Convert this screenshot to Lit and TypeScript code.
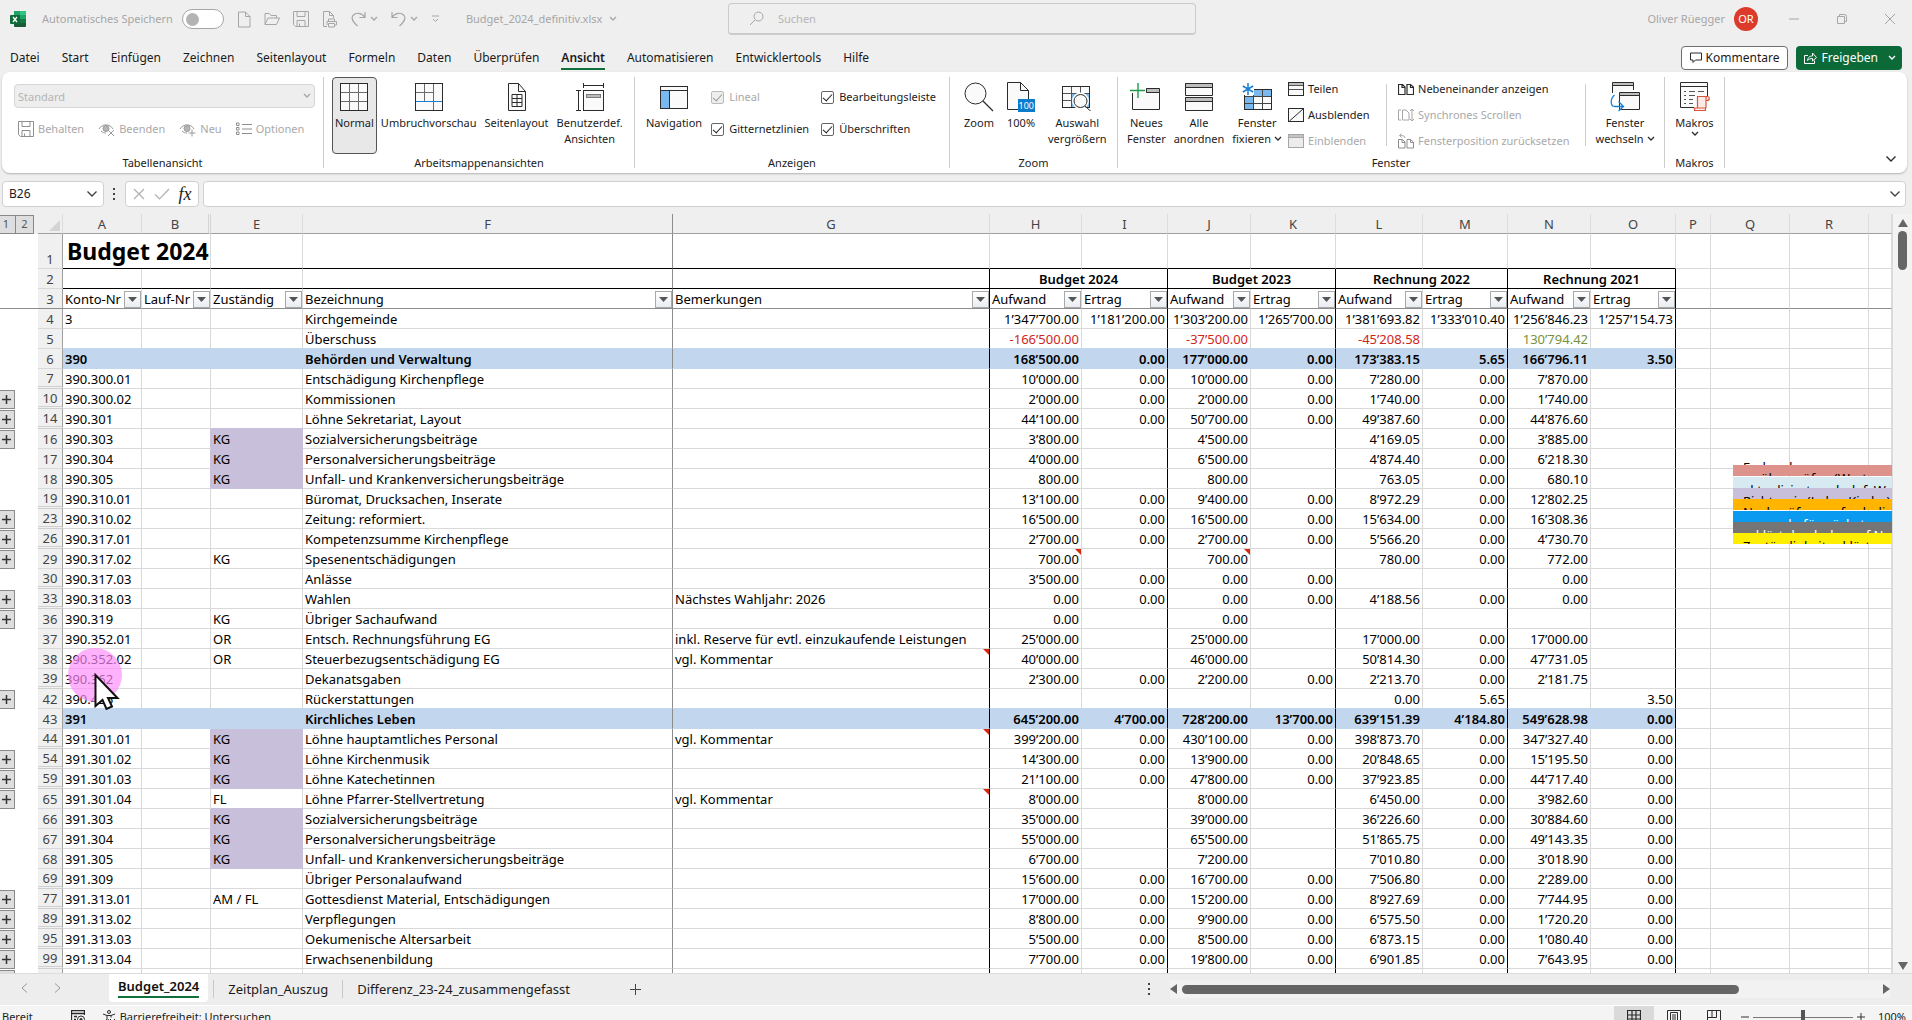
import { LitElement, html, css, svg, nothing, type TemplateResult } from "lit";
import { customElement } from "lit/decorators.js";
import { classMap } from "lit/directives/class-map.js";

const K = "#2b2b2b";
const G = "#a6a6a6";
const BLUE = "#1a7fd4";

const pic = (w: number, h: number, body: unknown) =>
  html`<svg class="pic" width=${w} height=${h} viewBox="0 0 ${w} ${h}" fill="none" aria-hidden="true">${body}</svg>`;

const chevron = (color = K, w = 8) =>
  html`<svg class="pic" width=${w} height="6" viewBox="0 0 8 6" fill="none" stroke=${color} stroke-width="1.3" aria-hidden="true"><path d="M1 1l3 3 3-3" /></svg>`;

const bigChevron = (color = K) =>
  html`<svg class="pic" width="12" height="8" viewBox="0 0 12 8" fill="none" stroke=${color} stroke-width="1.4" aria-hidden="true"><path d="M1.500 1.500l4.500 4.500 4.500-4.500" /></svg>`;

const icons = {
  excel: pic(16, 16, svg`
    <rect x="4" y="0" width="12" height="16" rx="1" fill="#185c37"/>
    <path d="M5 0h5v4H4V1a1 1 0 0 1 1-1z" fill="#21a366"/><path d="M10 0h5a1 1 0 0 1 1 1v3h-6z" fill="#33c481"/>
    <rect x="10" y="4" width="6" height="4" fill="#21a366"/><rect x="4" y="4" width="6" height="4" fill="#107c41"/>
    <rect x="10" y="8" width="6" height="4" fill="#107c41"/>
    <rect x="0" y="4" width="10" height="9" rx="1" fill="#0e6b38"/>
    <path d="M3 6l4 5M7 6l-4 5" stroke="#fff" stroke-width="1.300"/>`),
  doc: pic(13, 17, svg`<path d="M.5 1h7l4.500 4.500V16H.5zM7.500 1v4.500H12" stroke=${G}/>`),
  open: pic(16, 14, svg`<path d="M1 12.500V1.500h4.500l1.500 2h5.500v2.500M1 12.500L4 6h11.500l-3 6.500z" stroke=${G}/>`),
  save: pic(16, 16, svg`<path d="M.5.500h15v15H2.500l-2-2zM4 .5v5h8v-5M4 15.500V9.500h8v6M6.500 12.500v3" stroke=${G}/>`),
  print: pic(16, 17, svg`<path d="M5 15.500H1.500V.500h6l4 4V7M7.500.500v4h4" stroke=${G}/><path d="M6.500 10.500V8h6v2.500M5 14V10.500h9.500V14h-2M6.500 12.500h6V16h-6z" stroke=${G}/>`),
  redo: pic(15, 16, svg`<path d="M14 1v5.500H8.500M14 6.500C11 1.500 5 1 2 4.500c-2.500 3.500 0 6 2 8l2.500 2.500" stroke=${G} stroke-width="1.200"/>`),
  undo: pic(15, 16, svg`<path d="M1 1v5.500h5.500M1 6.500c3-5 9-5.500 12-2 2.500 3.500 0 6-2 8L8.500 15" stroke=${G} stroke-width="1.200"/>`),
  more: pic(9, 8, svg`<path d="M1 1h7M2 4l2.500 2.500L7 4" stroke=${G}/>`),
  lens: pic(15, 15, svg`<circle cx="9.500" cy="5.500" r="4.500" stroke=${G}/><path d="M6.200 8.800L1 14" stroke=${G}/>`),
  keep: pic(16, 16, svg`<path d="M.5.500h15v15H2.500l-2-2zM4 .5v5h8v-5M4 15.500V9.500h8v6M6.500 12.500v3" stroke="#8f8f8f"/>`),
  eyeX: pic(17, 15, svg`<path d="M1 7C4 1.500 12 1.500 15 7M3 9c1.500 1.500 3 2 5 2" stroke="#9a9a9a"/><circle cx="8" cy="6.500" r="3" fill="#b5b5b5" stroke="#9a9a9a"/><path d="M10 8l6 6M16 8l-6 6" stroke="#9a9a9a"/>`),
  eyePlus: pic(17, 15, svg`<path d="M1 7C4 1.500 12 1.500 15 7M3 9c1.500 1.500 3 2 5 2" stroke="#9a9a9a"/><circle cx="8" cy="6.500" r="3" fill="#b5b5b5" stroke="#9a9a9a"/><path d="M13 7.500v7M9.500 11h7" stroke="#9a9a9a"/>`),
  options: pic(16, 14, svg`<path d="M.5 1h2.500v2.500H.5zM.5 5.500h2.500V8H.5zM.5 10h2.500v2.500H.5zM6 2.500h10M6 7h10M6 11.500h10" stroke="#8f8f8f"/>`),
  gridBig: pic(28, 28, svg`<rect x=".5" y=".5" width="27" height="27" fill="#fafafa" stroke=${K}/><path d="M9.500 1v26M18.500 1v26M1 9.500h26M1 18.500h26" stroke="#6b6b6b"/>`),
  breaks: pic(28, 28, svg`<rect x=".5" y=".5" width="27" height="27" fill="#fafafa" stroke=${K}/><path d="M9.500 1v17M1 9.500h17" stroke="#6b6b6b"/><path d="M18.500 1v26M1 18.500h26" stroke=${BLUE}/>`),
  page: pic(18, 28, svg`<path d="M.5.500h10l7 8v19H.5z" fill="#fafafa" stroke=${K}/><path d="M10.500.500v8h7" stroke=${K}/><path d="M4 11.500h10v12H4zM9 11.500v12M4 15.500h10M4 19.500h10" stroke=${K}/>`),
  custom: pic(28, 28, svg`<path d="M7.500 2.500h20M7.500 0v5M27.500 0v5M2.500 7.500v20M0 7.500h5M0 27.500h5" stroke=${K}/><rect x="7.500" y="7.500" width="20" height="20" fill="#fafafa" stroke=${K}/><rect x="10.500" y="11.500" width="14" height="3" fill="#b8b8b8" stroke="#7a7a7a"/>`),
  nav: pic(28, 24, svg`<rect x=".5" y="1.500" width="27" height="22" fill="#fafafa" stroke=${K}/><path d="M1 6h8v17H1z" fill="#7ab8f0"/><path d="M.5 5.500h27M9.500 6v17" stroke=${K}/>`),
  zoom: pic(30, 30, svg`<circle cx="11.500" cy="11.500" r="10.500" fill="#fafafa" stroke=${K}/><path d="M19 19l10 10" stroke=${K} stroke-width="1.300"/>`),
  hundred: html`<span class="hundred">${pic(22, 28, svg`<path d="M.5.500h13l8 8v19H.5z" fill="#fafafa" stroke=${K}/><path d="M13.500.500v8h8" stroke=${K}/>`)}<span class="badge">100</span></span>`,
  selection: pic(30, 28, svg`<rect x=".5" y="3.500" width="27" height="21" fill="#fafafa" stroke=${K}/><path d="M9.500 10.500h18v14h-18z" fill="#7ab8f0"/><path d="M9.500 4v20M18.500 4v20M1 10.500h26M1 17.500h26" stroke="#555"/><rect x=".5" y="3.500" width="27" height="21" stroke=${K}/><circle cx="18.500" cy="18" r="8.500" fill="#fff"/><circle cx="18.500" cy="18" r="6.500" fill="#fafafa" stroke=${K}/><path d="M23 23l6 5.500" stroke=${K}/>`),
  newWin: pic(32, 28, svg`<path d="M2.500 10v16.500h27V6h-13" fill="#fafafa" stroke=${K}/><path d="M16.500 5.500h13v4h-13z" fill="#bdbdbd" stroke=${K}/><path d="M8 0v15M0 7.500h15" stroke="#1f9d4d" stroke-width="1.400"/>`),
  arrange: pic(28, 28, svg`<path d="M.5.500h27v12H.5zM.5 14.500h27v13H.5z" fill="#fafafa" stroke=${K}/><path d="M.5.500h27v4H.5zM.5 14.500h27v4H.5z" fill="#bdbdbd" stroke=${K}/>`),
  freeze: pic(30, 28, svg`<rect x="2.500" y="6.500" width="27" height="20" fill="#fafafa" stroke=${K}/><path d="M3 13h9v13H3zM12 7h17v6H12z" fill="#7ab8f0"/><path d="M11.500 7v19M20.500 7v19M3 13.500h26M3 20.500h26" stroke="#444"/><rect x="2.500" y="6.500" width="27" height="20" stroke=${K}/><rect x="0" y="0" width="12" height="12" fill="#fff"/><path d="M6 0v12M.8 3l10.400 6M11.200 3L.8 9" stroke=${BLUE} stroke-width="1.500"/>`),
  split: pic(16, 14, svg`<rect x=".5" y=".5" width="15" height="13" fill="#fafafa" stroke=${K}/><path d="M1 1h14v2H1z" fill="#bdbdbd"/><path d="M1 3.500h14M1 7.500h14" stroke="#555"/>`),
  hide: pic(16, 14, svg`<rect x=".5" y=".5" width="15" height="13" fill="#fafafa" stroke=${K}/><path d="M1.500 13L15 1" stroke=${K}/>`),
  unhide: pic(16, 14, svg`<rect x=".5" y=".5" width="15" height="13" fill="#ececec" stroke=${G}/><path d="M.5 3.500h15" stroke=${G}/><path d="M1 1h14v2H1z" fill="#c4c4c4"/>`),
  side: pic(16, 11, svg`<path d="M.5.500h4l2.500 2.500v7.500H.5zM9 .5h3.500l3 2.500v7.500H9zM4 .5v3h3M12.500.500v3h3" stroke=${K} stroke-width="1.200"/>`),
  sync: pic(16, 15, svg`<path d="M3 2H.5v10H3M4.500 2h3.500l3 3v7H4.500zM14 1v12M12 3l2-2 2 2M12 11l2 2 2-2" stroke=${G}/>`),
  reset: pic(16, 16, svg`<path d="M.5 6.500h4L7 9v6H.5zM9 6.500h3.500l3 2.500v6H9zM4 6.500v3h3M12.500 6.500v3h3" stroke="#8f8f8f"/><path d="M7 5C7 2.500 4 2.500 1.500 2.500M3.500.500l-2 2 2 2" stroke=${G}/>`),
  switchWin: pic(31, 30, svg`<path d="M2.500 11V1.500h21V8" fill="#fafafa" stroke=${K}/><path d="M2.500.500h21v3h-21z" fill="#bdbdbd" stroke=${K}/><path d="M9.500 11.500h20v16h-20z" fill="#fafafa" stroke=${K}/><path d="M9.500 10.500h20v3h-20z" fill="#bdbdbd" stroke=${K}/><path d="M4.500 13C0 17 0 24.500 5 24.500h8M8.500 19.500l5 5-5 4.500" stroke=${BLUE} stroke-width="1.300"/>`),
  macros: pic(30, 30, svg`<path d="M14 25.500H.5V.500h27V15" fill="#fafafa" stroke=${K}/><path d="M.5 4.500h27" stroke=${K}/><path d="M4 9.500h2M9 9.500h6M18 9.500h6M4 13.500h2M9 13.500h6M4 17.500h2M9 17.500h4M4 21.500h2M9 21.500h4" stroke="#555"/><path d="M17.500 26V14.500h9.500c3 0 3 4 0 4h-1V26M26 18.500v-4M14.500 26h11v2.500h-11z" fill="#fdece6" stroke="#d9553a" stroke-width="1.200"/>`),
  comment: pic(12, 12, svg`<path d="M.5 1h11v7H5.500L3 10.500V8H.5z" stroke=${K}/>`),
  share: pic(13, 12, svg`<path d="M4 3.500H.5v8h10V8.500M3.500 8.500C4 5 6 4 8.500 4V1l4 4.500-4 3.500V6.500C6.500 6.500 5 7 3.500 8.500z" stroke="#fff"/>`),
  cross: pic(12, 12, svg`<path d="M1 1l10 10M11 1L1 11" stroke="#b0b0b0" stroke-width="1.200"/>`),
  tick: pic(16, 12, svg`<path d="M1 6.500l4.500 4.500L15 1" stroke="#b0b0b0" stroke-width="1.200"/>`),
  dots: pic(3, 12, svg`<path d="M0 0h2v2H0zM0 5h2v2H0zM0 10h2v2H0z" fill="#444"/>`),
  minimize: pic(10, 10, svg`<path d="M0 5h10" stroke=${G}/>`),
  restore: pic(10, 10, svg`<path d="M2.500 2.500V.500h5a2 2 0 0 1 2 2v5H7.500M.5 2.500h7v7H.5z" stroke=${G}/>`),
  close: pic(10, 10, svg`<path d="M0 0l10 10M10 0L0 10" stroke=${G}/>`),
  record: pic(14, 14, svg`<path d="M6 12.500H.5V.500h13V5M.5 3.500h13M3 6.500h3M3 9.500h2" stroke=${K} stroke-width="1.300"/><circle cx="10" cy="9.500" r="3.500" fill="#f3f3f3" stroke=${K}/><circle cx="10" cy="9.500" r="1.500" fill=${K}/>`),
  access: pic(15, 14, svg`<circle cx="7" cy="2" r="1.500" stroke=${K}/><path d="M1 4l4 1.500v3L3.500 13M13 4L9 5.500v2M5 5.500h4M4 13l2.500-4" stroke=${K}/><path d="M8 9l5 5M13 9l-5 5" stroke=${K}/>`),
  viewGrid: pic(14, 14, svg`<path d="M.5.500h13v13H.5zM5 .5v13M9 .5v13M.5 5h13M.5 9h13" stroke=${K} stroke-width="1.200"/>`),
  viewPage: pic(14, 14, svg`<path d="M.5.500h13v13H.5zM3.500 2.500h7v9h-7zM5 5h4M5 7h4M5 9h4" stroke=${K}/>`),
  viewBreak: pic(14, 14, svg`<path d="M.5.500h13v13H.5zM5 .5v7M9.500.500v7h-9" stroke=${K}/>`),
  pointer: pic(26, 38, svg`<path d="M1.500 2v31l7-6 4 9 5.500-2.500-4-8.500h9.500z" fill="#fff" stroke="#111" stroke-width="2"/>`),
};

interface Row {
  n: number;
  cells: string[];
  expand: boolean;
  total: boolean;
  notes: number[];
}

/* Fields: row | account | responsible (* = shaded) | label | remark | eight amounts | flags.
   Flags: T total row, + collapsed group, digits mark columns that carry a comment. */
const SOURCE = `
4|3||Kirchgemeinde||1'347'700.00|1'181'200.00|1'303'200.00|1'265'700.00|1'381'693.82|1'333'010.40|1'256'846.23|1'257'154.73
5|||Überschuss||-166'500.00||-37'500.00||-45'208.58||130'794.42|
6|390||Behörden und Verwaltung||168'500.00|0.00|177'000.00|0.00|173'383.15|5.65|166'796.11|3.50|T
7|390.300.01||Entschädigung Kirchenpflege||10'000.00|0.00|10'000.00|0.00|7'280.00|0.00|7'870.00|
10|390.300.02||Kommissionen||2'000.00|0.00|2'000.00|0.00|1'740.00|0.00|1'740.00||+
14|390.301||Löhne Sekretariat, Layout||44'100.00|0.00|50'700.00|0.00|49'387.60|0.00|44'876.60||+
16|390.303|*KG|Sozialversicherungsbeiträge||3'800.00||4'500.00||4'169.05|0.00|3'885.00||+
17|390.304|*KG|Personalversicherungsbeiträge||4'000.00||6'500.00||4'874.40|0.00|6'218.30|
18|390.305|*KG|Unfall- und Krankenversicherungsbeiträge||800.00||800.00||763.05|0.00|680.10|
19|390.310.01||Büromat, Drucksachen, Inserate||13'100.00|0.00|9'400.00|0.00|8'972.29|0.00|12'802.25|
23|390.310.02||Zeitung: reformiert.||16'500.00|0.00|16'500.00|0.00|15'634.00|0.00|16'308.36||+
26|390.317.01||Kompetenzsumme Kirchenpflege||2'700.00|0.00|2'700.00|0.00|5'566.20|0.00|4'730.70||+
29|390.317.02|KG|Spesenentschädigungen||700.00||700.00||780.00|0.00|772.00||+46
30|390.317.03||Anlässe||3'500.00|0.00|0.00|0.00|||0.00|
33|390.318.03||Wahlen|Nächstes Wahljahr: 2026|0.00|0.00|0.00|0.00|4'188.56|0.00|0.00||+
36|390.319|KG|Übriger Sachaufwand||0.00||0.00||||||+
37|390.352.01|OR|Entsch. Rechnungsführung EG|inkl. Reserve für evtl. einzukaufende Leistungen|25'000.00||25'000.00||17'000.00|0.00|17'000.00|
38|390.352.02|OR|Steuerbezugsentschädigung EG|vgl. Kommentar|40'000.00||46'000.00||50'814.30|0.00|47'731.05||3
39|390.362||Dekanatsgaben||2'300.00|0.00|2'200.00|0.00|2'213.70|0.00|2'181.75|
42|390.436||Rückerstattungen||||||0.00|5.65||3.50|+
43|391||Kirchliches Leben||645'200.00|4'700.00|728'200.00|13'700.00|639'151.39|4'184.80|549'628.98|0.00|T
44|391.301.01|*KG|Löhne hauptamtliches Personal|vgl. Kommentar|399'200.00|0.00|430'100.00|0.00|398'873.70|0.00|347'327.40|0.00|3
54|391.301.02|*KG|Löhne Kirchenmusik||14'300.00|0.00|13'900.00|0.00|20'848.65|0.00|15'195.50|0.00|+
59|391.301.03|*KG|Löhne Katechetinnen||21'100.00|0.00|47'800.00|0.00|37'923.85|0.00|44'717.40|0.00|+
65|391.301.04|FL|Löhne Pfarrer-Stellvertretung|vgl. Kommentar|8'000.00||8'000.00||6'450.00|0.00|3'982.60|0.00|+3
66|391.303|*KG|Sozialversicherungsbeiträge||35'000.00||39'000.00||36'226.60|0.00|30'884.60|0.00
67|391.304|*KG|Personalversicherungsbeiträge||55'000.00||65'500.00||51'865.75|0.00|49'143.35|0.00
68|391.305|*KG|Unfall- und Krankenversicherungsbeiträge||6'700.00||7'200.00||7'010.80|0.00|3'018.90|0.00
69|391.309||Übriger Personalaufwand||15'600.00|0.00|16'700.00|0.00|7'506.80|0.00|2'289.00|0.00
77|391.313.01|AM / FL|Gottesdienst Material, Entschädigungen||17'000.00|0.00|15'200.00|0.00|8'927.69|0.00|7'744.95|0.00|+
89|391.313.02||Verpflegungen||8'800.00|0.00|9'900.00|0.00|6'575.50|0.00|1'720.20|0.00|+
95|391.313.03||Oekumenische Altersarbeit||5'500.00|0.00|8'500.00|0.00|6'873.15|0.00|1'080.40|0.00|+
99|391.313.04||Erwachsenenbildung||7'700.00|0.00|19'800.00|0.00|6'901.85|0.00|7'643.95|0.00|+
0|||||||||||||+`;

const ROWS: Row[] = SOURCE.trim().split("\n").map((line) => {
  const p = line.replace(/'/g, "’").split("|");
  const flags = p[13] ?? "";
  return {
    n: Number(p[0]),
    cells: [p[1], "", ...p.slice(2, 13)],
    expand: flags.includes("+"),
    total: flags === "T",
    notes: (flags.match(/\d/g) ?? []).map((d) => Number(d) + 1),
  };
});

const COLS = ["A", "B", "E", "F", "G", "H", "I", "J", "K", "L", "M", "N", "O", "P", "Q", "R", ""];
const PERIODS = ["Budget 2024", "Budget 2023", "Rechnung 2022", "Rechnung 2021"];
const FILTERS = ["Konto-Nr", "Lauf-Nr", "Zuständig", "Bezeichnung", "Bemerkungen", ...PERIODS.flatMap(() => ["Aufwand", "Ertrag"])];
const LEGEND: [string, string][] = [
  ["pink", "zu überprüfen (Wert aus Vorjahr)"],
  ["ice", "aktualisiert nach def. Wert VJ"],
  ["lilac", "Richtpreis (Lohn, Kirche)"],
  ["orange", "Nachprüfung erforderlich"],
  ["azure", "zu regeln für nächstes auf NR"],
  ["gray", "erklärt durch das auf Nr (VJ)"],
  ["yellow", "Zuständigkeit erklärt"],
];

/** Vertical rule at the right of a column: frozen pane edge or a period's frame. */
const edge = (i: number) => ({
  pane: i === 3,
  frame: [4, 6, 8, 10, 12].includes(i),
});

@customElement("budget-grid")
export class BudgetGrid extends LitElement {
  static styles = css`
    :host { display: block; position: relative; flex: 1; min-width: 0; overflow: hidden; background: #fff; }
    table { width: 100%; table-layout: fixed; border-collapse: separate; border-spacing: 0; }
    th, td { box-sizing: border-box; height: 20px; padding: 1px 2px 0; border: 0 solid #d9d9d9; border-right-width: 1px; border-bottom-width: 1px; font-size: 13px; line-height: 18px; font-weight: 400; text-align: left; white-space: nowrap; overflow: visible; color: #000; position: relative; }
    .letters th { background: #efefef; color: #444; text-align: center; border-bottom-color: #a0a0a0; border-right-color: #dcdcdc; }
    .letters .twin { border-right: 3px double #d4d4d4; }
    .letters .corner { padding: 0; }
    .corner svg { display: block; margin: 4px 2px 0 auto; }
    td.gutter, .letters th.gutter { border: 0; padding: 0; background: #fff; }
    .letters th.gutter { background: #efefef; }
    .levels { display: flex; }
    .levels button { width: 19px; height: 19px; padding: 0; border: 1px solid #888; background: #dedede; color: #555; font: 11px/16px "Noto Sans", sans-serif; }
    .levels button:first-child { width: 15px; border-width: 1px 0 1px 0; padding-right: 3px; }
    .plus { display: grid; place-items: center; width: 15px; height: 19px; padding: 0 2px 0 0; border: 1px solid #8a8a8a; border-left: 0; background: #dedede; }
    .num { background: #f0f0f0; color: #444; text-align: center; padding: 1px 0 0; border-right-color: #a0a0a0; }
    .skip { border-bottom: 3px double #cfcfcf; line-height: 16px; }
    .titlerow th, .titlerow td { height: 35px; vertical-align: bottom; }
    .titlerow .title { font-size: 23px; line-height: 33px; font-weight: 700; padding: 1px 4px 0; }
    .ink { border-bottom-color: #000; }
    .frame { border-right-color: #000; }
    .pane, .letters th.pane { border-right-color: #8c8c8c; }
    .period { text-align: center; font-weight: 600; }
    .frozen > *, .frozen td.gutter { border-bottom: 1px solid #8c8c8c; }
    .filter { display: flex; justify-content: space-between; align-items: center; height: 18px; margin-right: -2px; overflow: hidden; }
    .filter button { flex: none; display: grid; place-items: center; width: 17px; height: 17px; padding: 0; border: 1px solid #a9a9a9; background: linear-gradient(#fff, #e9edf2); }
    .right { text-align: right; }
    .total .blue { background: #c2d6ee; font-weight: 600; border-color: #c2d6ee; }
    .total .frame { border-right-color: #000; }
    .total .pane { border-right-color: #8c8c8c; }
    .before .blue { border-bottom-color: #c2d6ee; }
    .kg { background: #c8c0da; border-color: #c8c0da; }
    .kgright { border-right-color: #c8c0da; }
    .kgabove { border-bottom-color: #c8c0da; }
    .neg { color: #d0241b; }
    .pos { color: #76923c; }
    .note::after { content: ""; position: absolute; top: 0; right: 0; border-top: 6px solid #d62a10; border-left: 6px solid transparent; }
    .legend { position: absolute; top: 242px; right: 0; width: 159px; font-size: 13px; line-height: 16px; color: #000; }
    .head, .band { height: 11px; overflow: hidden; padding: 5px 0 0 10px; box-sizing: border-box; white-space: nowrap; }
    .head { height: 9px; padding-top: 3px; }
    .pink { background: #dd938c; } .ice { background: #d7eaf2; margin-top: 1px; } .lilac { background: #c8c0da; }
    .orange { background: #ffb400; } .azure { background: #0a9bf0; color: #fff; margin-top: 1px; } .gray { background: #757575; color: #fff; }
    .yellow { background: #ffee00; }
  `;

  private plus() {
    return html`<button class="plus" aria-label="Gruppe einblenden">
      <svg width="9" height="9" viewBox="0 0 9 9" aria-hidden="true"><path d="M4.500 0v9M0 4.500h9" stroke="#333" stroke-width="1.500" /></svg>
    </button>`;
  }

  private row(r: Row, i: number): TemplateResult {
    const next = ROWS[i + 1];
    const skipped = !next || next.n !== r.n + 1;
    return html`<tr class=${classMap({ total: r.total, before: !!next?.total })}>
      <td class="gutter">${r.expand ? this.plus() : nothing}</td>
      <th scope="row" class=${classMap({ num: true, skip: skipped })}>${r.n || nothing}</th>
      ${[...r.cells, "", "", "", "", "", ""].slice(0, 17).map((raw, c) => {
        const kg = raw.startsWith("*");
        const cls = {
          ...edge(c),
          right: c > 4,
          kg,
          blue: c < 13,
          kgright: c === 1 && (r.cells[2] ?? "").startsWith("*"),
          kgabove: c === 2 && !kg && !!next?.cells[2]?.startsWith("*") && !r.total,
          neg: c > 4 && raw.startsWith("-"),
          pos: c > 4 && r.n === 5 && !raw.startsWith("-"),
          note: r.notes.includes(c),
        };
        return html`<td class=${classMap(cls)}>${kg ? raw.slice(1) : raw}</td>`;
      })}
    </tr>`;
  }

  render() {
    const widths = [38, 25, 79, 69, 92, 370, 317, 92, 86, 83, 85, 87, 85, 83, 85, 35, 79, 79];
    return html`
      <table>
        <colgroup>${widths.map((w) => html`<col style="width:${w}px" />`)}<col /></colgroup>
        <thead>
          <tr class="letters">
            <th class="gutter"><div class="levels"><button>1</button><button>2</button></div></th>
            <th class="corner"><svg width="11" height="11" viewBox="0 0 11 11" aria-hidden="true"><path d="M11 0v11H0z" fill="#d4d4d4" /></svg></th>
            ${COLS.map((l, c) => html`<th scope="col" class=${classMap({ pane: c === 3, twin: c === 1 })}>${l}</th>`)}
          </tr>
        </thead>
        <tbody>
          <tr class="titlerow">
            <td class="gutter"></td><th scope="row" class="num">1</th>
            <td class="title ink" colspan="2">Budget 2024</td>
            ${COLS.slice(2).map((_, i) => html`<td class=${classMap({ ink: i + 2 < 13, pane: i === 1 })}></td>`)}
          </tr>
          <tr>
            <td class="gutter"></td><th scope="row" class="num">2</th>
            ${COLS.slice(0, 5).map((_, c) => html`<td class=${classMap({ ink: true, ...edge(c) })}></td>`)}
            ${PERIODS.map((p) => html`<th scope="colgroup" class="period ink frame" colspan="2">${p}</th>`)}
            <td></td><td></td><td></td><td></td>
          </tr>
          <tr class="frozen">
            <td class="gutter"></td><th scope="row" class="num">3</th>
            ${FILTERS.map((f, c) => html`<th scope="col" class=${classMap(edge(c))}>
              <div class="filter"><span>${f}</span><button aria-label="${f} filtern"><svg width="9" height="5" viewBox="0 0 9 5" aria-hidden="true"><path d="M0 0h9L4.500 5z" fill="#555" /></svg></button></div>
            </th>`)}
            <td></td><td></td><td></td><td></td>
          </tr>
          ${ROWS.map((r, i) => this.row(r, i))}
        </tbody>
      </table>
      <div class="legend">
        <div class="head">Farbcodes</div>
        ${LEGEND.map(([c, t]) => html`<div class="band ${c}">${t}</div>`)}
      </div>
    `;
  }
}

@customElement("app-root")
export class AppRoot extends LitElement {
  static styles = css`
    :host { display: flex; flex-direction: column; position: relative; height: 100vh; overflow: hidden; background: #efefef; font-family: "Noto Sans", "Open Sans", sans-serif; font-size: 11px; line-height: 16px; color: #1b1b1b; }
    * { box-sizing: border-box; }
    button { font: inherit; color: inherit; background: none; border: 0; padding: 0; white-space: nowrap; }
    input, select { font: inherit; color: inherit; }
    .pic { display: block; flex: none; }
    .spacer { flex: 1; }

    .titlebar { display: grid; grid-template-columns: 728px 468px 1fr; flex: none; height: 38px; color: #a6a6a6; }
    .left { display: flex; align-items: center; padding-left: 10px; }
    .left label { display: flex; align-items: center; gap: 9px; margin: 0 14px 0 16px; }
    .toggle { appearance: none; width: 42px; height: 20px; margin: 0; padding: 3px; border: 1px solid #a6a6a6; border-radius: 10px; background: #fff; display: flex; }
    .toggle::before { content: ""; width: 13px; height: 13px; border-radius: 50%; background: #b4b4b4; }
    .quick { display: flex; align-items: center; gap: 13px; margin-right: 26px; }
    .quick button { display: flex; align-items: center; gap: 4px; }
    .file { display: flex; align-items: center; gap: 6px; }
    .search { display: flex; align-items: center; gap: 14px; height: 32px; margin-top: 3px; padding: 0 20px; border: 1px solid #cbcbcb; border-bottom-width: 2px; border-radius: 4px; }
    .search input { flex: 1; min-width: 0; border: 0; background: none; outline: 0; padding: 0; }
    .search input::placeholder { color: #b5b5b5; opacity: 1; }
    .right { display: flex; align-items: center; justify-content: flex-end; padding-right: 17px; }
    .avatar { width: 24px; height: 24px; margin: 0 31px 0 9px; border-radius: 50%; background: #dc3a2b; color: #fff; text-align: center; line-height: 24px; font-size: 11px; }
    .window { display: flex; gap: 38px; }

    .tabs { display: flex; align-items: center; flex: none; height: 34px; padding: 6px 10px 0; font-size: 12px; }
    .tabs nav { display: flex; gap: 22px; padding-top: 2px; }
    .tabs a { color: inherit; text-decoration: none; line-height: 20px; border-bottom: 2px solid transparent; }
    .tabs a.on { font-weight: 600; border-color: #0f703b; }
    .outline, .share { display: flex; align-items: center; height: 24px; gap: 4px; border-radius: 4px; }
    .outline { padding: 0 8px; border: 1px solid #6e6e6e; background: #fff; margin-right: 8px; }
    .share { padding: 0 6px 0 8px; background: #0b6a37; color: #fff; }
    .share svg:last-child { margin-left: 6px; }

    .ribbon { display: flex; flex: none; height: 101px; margin: 0 5px 0 2px; border-radius: 8px; background: #fff; box-shadow: 0 1px 2px rgba(0, 0, 0, 0.25); }
    .group { display: flex; flex-direction: column; position: relative; margin: 5px 0; border-right: 1px solid #cdcdcd; }
    .body { display: flex; flex: none; height: 77px; align-items: flex-start; }
    .caption { line-height: 18px; text-align: center; }
    .g1 { width: 322px; } .g2 { width: 311px; } .g3 { width: 315px; } .g4 { width: 168px; } .g5 { width: 547px; } .g6 { width: 60px; }
    .g1 .body { flex-direction: column; padding: 7px 8px 0 12px; gap: 13px; }
    .style { appearance: none; width: 100%; height: 24px; padding: 1px 3px 0; border: 1px solid #d6d6d6; border-radius: 4px; background: #eee; color: #b5b5b5; opacity: 1; }
    .stylewrap { display: grid; width: 100%; align-items: center; }
    .stylewrap > * { grid-area: 1 / 1; }
    .stylewrap svg { justify-self: end; margin-right: 4px; }
    .line { display: flex; gap: 14px; padding-left: 4px; }
    .line button, .stack button { display: flex; align-items: center; gap: 4px; }
    .line .dim, .stack .dim, label.dim { color: #a9a9a9; }
    .big { display: flex; flex-direction: column; align-items: center; height: 77px; padding: 0 3px; border: 1px solid transparent; border-radius: 4px; }
    .big .art { display: grid; place-items: center; height: 37px; }
    .big.on { background: #e8e8e8; border-color: #555; padding: 0 2px; }
    .big .two { display: flex; align-items: center; gap: 3px; }
    .g2 .body { padding-left: 8px; }
    .g3 .body { padding-left: 7px; gap: 5px; }
    .checks { display: grid; grid-template-columns: 110px auto; row-gap: 16px; padding-top: 12px; }
    .checks label { display: flex; align-items: center; gap: 5px; }
    .checks input { appearance: none; display: grid; place-items: start center; width: 13px; height: 13px; margin: 0; border: 1px solid #666; border-radius: 2px; background: #fff; }
    .checks input:checked::before { content: ""; width: 4px; height: 8px; border: solid #222; border-width: 0 1px 1px 0; transform: rotate(42deg); }
    .checks input:disabled { border-color: #bbb; background: #eee; }
    .checks input:disabled::before { border-color: #999; }
    .g4 .body { padding-left: 10px; gap: 5px; }
    .hundred { display: grid; width: 28px; height: 30px; }
    .hundred > * { grid-area: 1 / 1; }
    .badge { align-self: end; justify-self: end; padding: 0 1px; height: 13px; background: #0b7bcb; color: #fff; font-size: 9px; line-height: 13px; }
    .g5 .body { padding-left: 5px; }
    .stack { display: flex; flex-direction: column; gap: 10px; padding-top: 4px; }
    .stack button { height: 16px; line-height: 16px; }
    .stack.a { width: 98px; margin-left: 2px; }
    .stack.b { width: 198px; padding-left: 11px; }
    .rule { width: 1px; height: 62px; margin-top: 7px; background: #cdcdcd; }
    .g5 .last { margin: 0 auto; }
    .g6 .big { margin: 0 auto; }
    .collapse { align-self: flex-end; margin: 0 10px 10px auto; }

    .formula { display: flex; flex: none; align-items: center; gap: 4px; height: 41px; padding: 1px 6px 0 2px; }
    .box { display: flex; align-items: center; height: 26px; border: 1px solid #d0d0d0; border-radius: 4px; background: #fff; }
    .name { width: 102px; padding: 0 5px 0 6px; }
    .name input { width: 76px; flex: 1; min-width: 0; border: 0; padding: 0; outline: 0; font-size: 12px; }
    .formula .grip { padding: 0 5px 0 5px; }
    .tools { width: 74px; padding: 0 5px; gap: 9px; justify-content: center; }
    .fx { font: italic 18px/22px "Liberation Serif", serif; color: #222; }
    .entry { flex: 1; padding: 0 4px; }
    .entry input { flex: 1; min-width: 0; border: 0; outline: 0; }

    .sheet { display: flex; flex: 1; min-height: 0; }
    .vbar { display: flex; flex-direction: column; align-items: center; width: 20px; padding: 5px 0 3px; border-left: 1px solid #dcdcdc; background: #f3f3f3; }
    .vthumb { width: 9px; height: 39px; margin-top: 4px; border-radius: 5px; background: #666; }

    .sheets { display: flex; flex: none; align-items: flex-start; height: 32px; border-top: 1px solid #dcdcdc; font-size: 13px; background: #ededed; }
    .arrows { display: flex; gap: 26px; padding: 9px 0 0 21px; width: 109px; }
    .tab { display: flex; align-items: flex-start; }
    .active { height: 28px; padding: 2px 9px 0; background: #fff; border-radius: 0 0 4px 4px; font-weight: 600; color: #111; }
    .active span { line-height: 20px; border-bottom: 2px solid #0f703b; }
    .plain { height: 18px; margin-top: 6px; padding: 0 14px; border-left: 1px solid #c8c8c8; line-height: 18px; }
    .first { margin-left: 5px; }
    .add { margin: 10px 0 0 46px; }
    .sheets .grip { margin: 9px 19px 0 0; }
    .hbar { display: flex; align-items: center; width: 720px; height: 18px; margin: 6px 22px 0 0; gap: 5px; background: #f2f2f2; }
    .track { flex: 1; }
    .hthumb { width: 80%; height: 9px; border-radius: 5px; background: #666; }

    .status { flex: none; height: 15px; overflow: hidden; background: #f4f4f4; border-top: 1px solid #fff; }
    .statusrow { display: flex; align-items: center; height: 22px; padding: 0 6px 0 2px; }
    .statusrow .rec { margin: 0 17px 0 38px; }
    .statusrow .acc { display: flex; gap: 3px; align-items: center; }
    .views { display: flex; margin-right: 7px; }
    .view { display: grid; place-items: center; width: 40px; height: 22px; }
    .view.on { background: #dadada; }
    .slider { appearance: none; width: 100px; height: 14px; margin: 0 4px; background: linear-gradient(#777, #777) center / 100% 1px no-repeat; }
    .slider::-webkit-slider-thumb { appearance: none; width: 4px; height: 14px; background: #555; }
    .pct { margin-left: 13px; }

    .halo { position: absolute; left: 68px; top: 648px; width: 54px; height: 54px; border-radius: 50%; background: rgba(255, 140, 250, 0.68); pointer-events: none; }
    .arrow { position: absolute; left: 94px; top: 673px; pointer-events: none; }
  `;

  private big(art: unknown, one: string, two = "", opts: { on?: boolean; drop?: boolean; cls?: string } = {}) {
    return html`<button class="big ${opts.on ? "on" : ""} ${opts.cls ?? ""}">
      <span class="art">${art}</span><span>${one}</span>
      ${two || opts.drop ? html`<span class="two">${two}${opts.drop ? chevron() : nothing}</span>` : nothing}
    </button>`;
  }

  private small(art: unknown, text: string, dim = false) {
    return html`<button class=${dim ? "dim" : ""} ?disabled=${dim}>${art}<span>${text}</span></button>`;
  }

  private check(text: string, disabled = false) {
    return html`<label class=${disabled ? "dim" : ""}><input type="checkbox" checked ?disabled=${disabled} />${text}</label>`;
  }

  render() {
    const tabs = ["Datei", "Start", "Einfügen", "Zeichnen", "Seitenlayout", "Formeln", "Daten", "Überprüfen", "Ansicht", "Automatisieren", "Entwicklertools", "Hilfe"];
    return html`
      <header class="titlebar">
        <div class="left">
          ${icons.excel}
          <label>Automatisches Speichern <input class="toggle" type="checkbox" role="switch" /></label>
          <div class="quick">
            <button aria-label="Neu">${icons.doc}</button>
            <button aria-label="Öffnen">${icons.open}</button>
            <button aria-label="Speichern">${icons.save}</button>
            <button aria-label="Drucken">${icons.print}</button>
            <button aria-label="Wiederholen">${icons.redo}${chevron(G)}</button>
            <button aria-label="Rückgängig">${icons.undo}${chevron(G)}</button>
            <button aria-label="Symbolleiste anpassen">${icons.more}</button>
          </div>
          <button class="file">Budget_2024_definitiv.xlsx ${chevron(G, 10)}</button>
        </div>
        <label class="search">${icons.lens}<input type="search" placeholder="Suchen" aria-label="Suchen" /></label>
        <div class="right">
          <span>Oliver Rüegger</span><span class="avatar">OR</span>
          <div class="window">
            <button aria-label="Minimieren">${icons.minimize}</button>
            <button aria-label="Wiederherstellen">${icons.restore}</button>
            <button aria-label="Schließen">${icons.close}</button>
          </div>
        </div>
      </header>

      <div class="tabs">
        <nav>${tabs.map((t) => html`<a href="#" class=${t === "Ansicht" ? "on" : ""}>${t}</a>`)}</nav>
        <span class="spacer"></span>
        <button class="outline">${icons.comment}Kommentare</button>
        <button class="share">${icons.share}Freigeben${chevron("#fff")}</button>
      </div>

      <section class="ribbon">
        <div class="group g1">
          <div class="body">
            <div class="stylewrap">
              <select class="style" disabled aria-label="Tabellenansicht"><option>Standard</option></select>
              ${chevron(G)}
            </div>
            <div class="line">
              ${this.small(icons.keep, "Behalten", true)}${this.small(icons.eyeX, "Beenden", true)}
              ${this.small(icons.eyePlus, "Neu", true)}${this.small(icons.options, "Optionen", true)}
            </div>
          </div>
          <div class="caption">Tabellenansicht</div>
        </div>
        <div class="group g2">
          <div class="body">
            ${this.big(icons.gridBig, "Normal", "", { on: true })}${this.big(icons.breaks, "Umbruchvorschau")}
            ${this.big(icons.page, "Seitenlayout")}${this.big(icons.custom, "Benutzerdef.", "Ansichten")}
          </div>
          <div class="caption">Arbeitsmappenansichten</div>
        </div>
        <div class="group g3">
          <div class="body">
            ${this.big(icons.nav, "Navigation")}
            <div class="checks">
              ${this.check("Lineal", true)}${this.check("Bearbeitungsleiste")}
              ${this.check("Gitternetzlinien")}${this.check("Überschriften")}
            </div>
          </div>
          <div class="caption">Anzeigen</div>
        </div>
        <div class="group g4">
          <div class="body">
            ${this.big(icons.zoom, "Zoom")}${this.big(icons.hundred, "100%")}${this.big(icons.selection, "Auswahl", "vergrößern")}
          </div>
          <div class="caption">Zoom</div>
        </div>
        <div class="group g5">
          <div class="body">
            ${this.big(icons.newWin, "Neues", "Fenster")}${this.big(icons.arrange, "Alle", "anordnen")}
            ${this.big(icons.freeze, "Fenster", "fixieren", { drop: true })}
            <div class="stack a">
              ${this.small(icons.split, "Teilen")}${this.small(icons.hide, "Ausblenden")}${this.small(icons.unhide, "Einblenden", true)}
            </div>
            <span class="rule"></span>
            <div class="stack b">
              ${this.small(icons.side, "Nebeneinander anzeigen")}${this.small(icons.sync, "Synchrones Scrollen", true)}
              ${this.small(icons.reset, "Fensterposition zurücksetzen", true)}
            </div>
            <span class="rule"></span>
            ${this.big(icons.switchWin, "Fenster", "wechseln", { drop: true, cls: "last" })}
          </div>
          <div class="caption">Fenster</div>
        </div>
        <div class="group g6">
          <div class="body">${this.big(icons.macros, "Makros", "", { drop: true })}</div>
          <div class="caption">Makros</div>
        </div>
        <button class="collapse" aria-label="Menüband reduzieren">${bigChevron()}</button>
      </section>

      <section class="formula">
        <div class="box name"><input aria-label="Namenfeld" value="B26" />${bigChevron("#444")}</div>
        <span class="grip">${icons.dots}</span>
        <div class="box tools">
          <button aria-label="Abbrechen">${icons.cross}</button><button aria-label="Eingeben">${icons.tick}</button>
          <button class="fx" aria-label="Funktion einfügen">fx</button>
        </div>
        <div class="box entry"><input aria-label="Bearbeitungsleiste" />${bigChevron("#444")}</div>
      </section>

      <main class="sheet">
        <budget-grid></budget-grid>
        <div class="vbar">
          ${pic(10, 8, svg`<path d="M5 0l5 8H0z" fill="#666"/>`)}
          <span class="vthumb"></span><span class="spacer"></span>
          ${pic(10, 8, svg`<path d="M0 0h10L5 8z" fill="#666"/>`)}
        </div>
      </main>

      <footer class="sheets">
        <div class="arrows">
          <button aria-label="Vorheriges Blatt">${pic(7, 10, svg`<path d="M6 .5L1 5l5 4.500" stroke="#999"/>`)}</button>
          <button aria-label="Nächstes Blatt">${pic(7, 10, svg`<path d="M1 .5L6 5 1 9.500" stroke="#999"/>`)}</button>
        </div>
        <button class="tab active"><span>Budget_2024</span></button>
        <button class="tab plain first">Zeitplan_Auszug</button>
        <button class="tab plain">Differenz_23-24_zusammengefasst</button>
        <button class="add" aria-label="Neues Blatt">${pic(11, 11, svg`<path d="M5.500 0v11M0 5.500h11" stroke="#444"/>`)}</button>
        <span class="spacer"></span>
        <span class="grip">${icons.dots}</span>
        <div class="hbar">
          ${pic(7, 10, svg`<path d="M7 0v10L0 5z" fill="#666"/>`)}
          <div class="track"><div class="hthumb"></div></div>
          ${pic(7, 10, svg`<path d="M0 0v10l7-5z" fill="#666"/>`)}
        </div>
      </footer>

      <div class="status">
        <div class="statusrow">
          <span>Bereit</span><button class="rec" aria-label="Makro aufzeichnen">${icons.record}</button>
          <button class="acc">${icons.access}Barrierefreiheit: Untersuchen</button>
          <span class="spacer"></span>
          <div class="views">
            <button class="view on" aria-label="Normal">${icons.viewGrid}</button>
            <button class="view" aria-label="Seitenlayout">${icons.viewPage}</button>
            <button class="view" aria-label="Umbruchvorschau">${icons.viewBreak}</button>
          </div>
          <button aria-label="Verkleinern">${pic(8, 8, svg`<path d="M0 4h8" stroke="#333"/>`)}</button>
          <input class="slider" type="range" min="0" max="200" value="100" aria-label="Zoom" />
          <button aria-label="Vergrößern">${pic(8, 8, svg`<path d="M0 4h8M4 0v8" stroke="#333"/>`)}</button>
          <span class="pct">100%</span>
        </div>
      </div>

      <span class="halo"></span>
      <span class="arrow">${icons.pointer}</span>
    `;
  }
}
